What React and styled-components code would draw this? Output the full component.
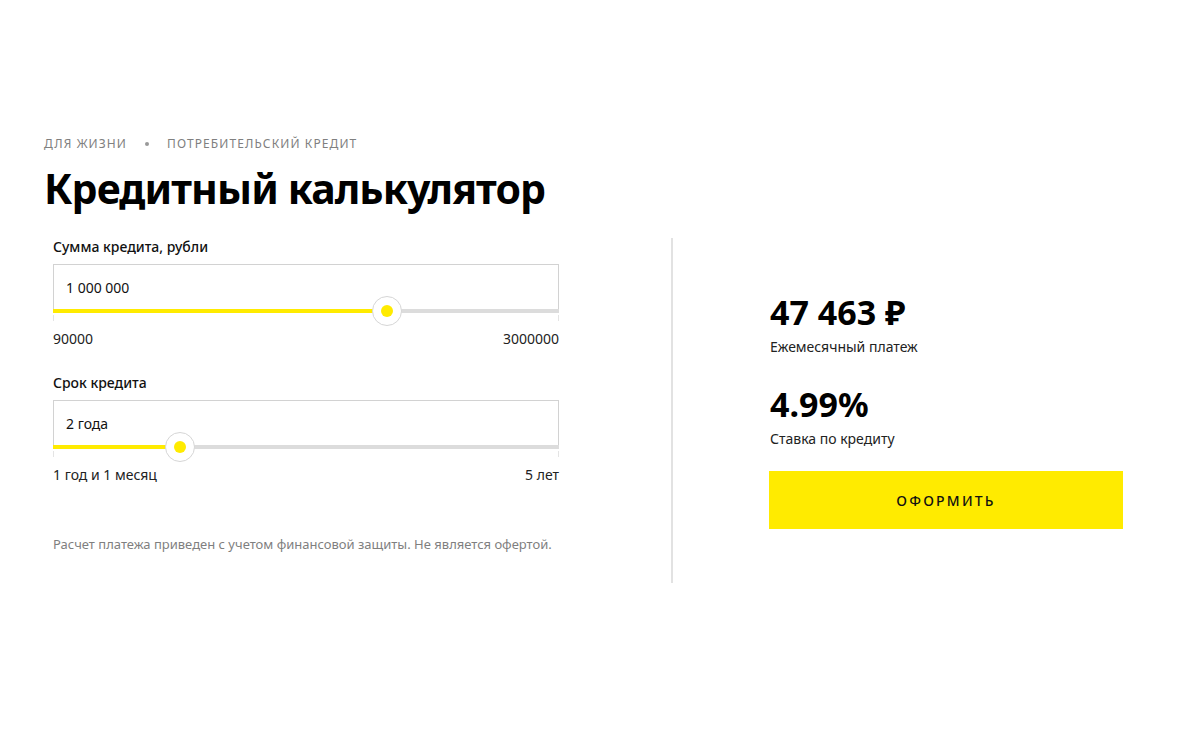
import React, { useState } from "react";
import styled, { createGlobalStyle } from "styled-components";

const GlobalStyle = createGlobalStyle`
  body {
    margin: 0;
    background: #fff;
    font-family: "Noto Sans", "Liberation Sans", sans-serif;
    color: #111;
  }
`;

const YELLOW = "#ffeb00";

const Page = styled.div`
  padding: 136px 0 0 44px;
  width: 1200px;
  box-sizing: border-box;
`;

const Crumbs = styled.div`
  display: flex;
  align-items: center;
  gap: 18px;
  font-size: 12px;
  line-height: 16px;
  letter-spacing: 1.1px;
  text-transform: uppercase;
  color: #808080;
`;

const Dot = styled.span`
  width: 4px;
  height: 4px;
  border-radius: 50%;
  background: #999;
`;

const Title = styled.h1`
  margin: 8px 0 0;
  font-size: 41px;
  line-height: 56px;
  font-weight: 700;
  letter-spacing: -0.9px;
  color: #000;
`;

const Columns = styled.div`
  display: flex;
  margin-top: 22px;
`;

const Left = styled.div`
  width: 506px;
  padding: 0 0 30px 9px;
`;

const Divider = styled.div`
  width: 2px;
  background: #e2e2e2;
  margin-left: 112px;
`;

const Right = styled.div`
  width: 354px;
  margin-left: 97px;
  align-self: center;
`;

const Label = styled.div`
  font-size: 14px;
  line-height: 18px;
  font-weight: 500;
  margin-top: ${(p) => p.$top || 0}px;
`;

const Field = styled.div`
  margin-top: 8px;
  height: 45px;
  box-sizing: border-box;
  border: 1px solid #d2d2d2;
  border-bottom: none;
  display: flex;
  align-items: center;
  padding: 0 12px;
  font-size: 14px;
`;

const Track = styled.div`
  position: relative;
  height: 4px;
  background: #dcdcdc;

  &::before,
  &::after {
    content: "";
    position: absolute;
    top: 6px;
    width: 1px;
    height: 6px;
    background: #e4e4e4;
  }
  &::before { left: 0; }
  &::after { right: 0; }
`;

const Fill = styled.div`
  height: 100%;
  background: ${YELLOW};
`;

const Thumb = styled.div`
  position: absolute;
  top: 50%;
  width: 28px;
  height: 28px;
  margin: -15px 0 0 -15px;
  border-radius: 50%;
  background: #fff;
  border: 1px solid #d6d6d6;
  display: flex;
  align-items: center;
  justify-content: center;

  &::after {
    content: "";
    width: 12px;
    height: 12px;
    border-radius: 50%;
    background: ${YELLOW};
  }
`;

const Range = styled.div`
  display: flex;
  justify-content: space-between;
  margin-top: ${(p) => p.$top}px;
  font-size: 14px;
  line-height: 18px;
  color: #222;
`;

const Note = styled.p`
  margin: 51px 0 0;
  font-size: 13px;
  line-height: 18px;
  color: #7f7f7f;
`;

const Big = styled.div`
  font-size: 34px;
  line-height: 40px;
  font-weight: 700;
  color: #000;
  margin-top: ${(p) => p.$top || 0}px;
`;

const Caption = styled.div`
  font-size: 14px;
  line-height: 18px;
  margin-top: 6px;
  color: #222;
`;

const Button = styled.button`
  display: block;
  width: 354px;
  height: 58px;
  margin: 23px 0 0 -1px;
  border: none;
  background: ${YELLOW};
  font-family: inherit;
  font-size: 14px;
  font-weight: 500;
  letter-spacing: 2.2px;
  color: #111;
  cursor: pointer;
`;

function Slider({ label, value, min, max, percent, top }) {
  return (
    <>
      <Label $top={top}>{label}</Label>
      <Field>{value}</Field>
      <Track>
        <Fill style={{ width: `${percent}%` }} />
        <Thumb style={{ left: `${percent}%` }} />
      </Track>
      <Range $top={17}>
        <span>{min}</span>
        <span>{max}</span>
      </Range>
    </>
  );
}

export default function App() {
  const [sum] = useState(66);
  const [term] = useState(25);

  return (
    <Page>
      <GlobalStyle />
      <Crumbs>
        <span>Для жизни</span>
        <Dot />
        <span>Потребительский кредит</span>
      </Crumbs>
      <Title>Кредитный калькулятор</Title>
      <Columns>
        <Left>
          <Slider
            label="Сумма кредита, рубли"
            value="1 000 000"
            min="90000"
            max="3000000"
            percent={sum}
          />
          <Slider
            label="Срок кредита"
            value="2 года"
            min="1 год и 1 месяц"
            max="5 лет"
            percent={term}
            top={26}
          />
          <Note>Расчет платежа приведен с учетом финансовой защиты. Не является офертой.</Note>
        </Left>
        <Divider />
        <Right>
          <Big>47 463 ₽</Big>
          <Caption>Ежемесячный платеж</Caption>
          <Big $top={28}>4.99%</Big>
          <Caption>Ставка по кредиту</Caption>
          <Button>ОФОРМИТЬ</Button>
        </Right>
      </Columns>
    </Page>
  );
}
